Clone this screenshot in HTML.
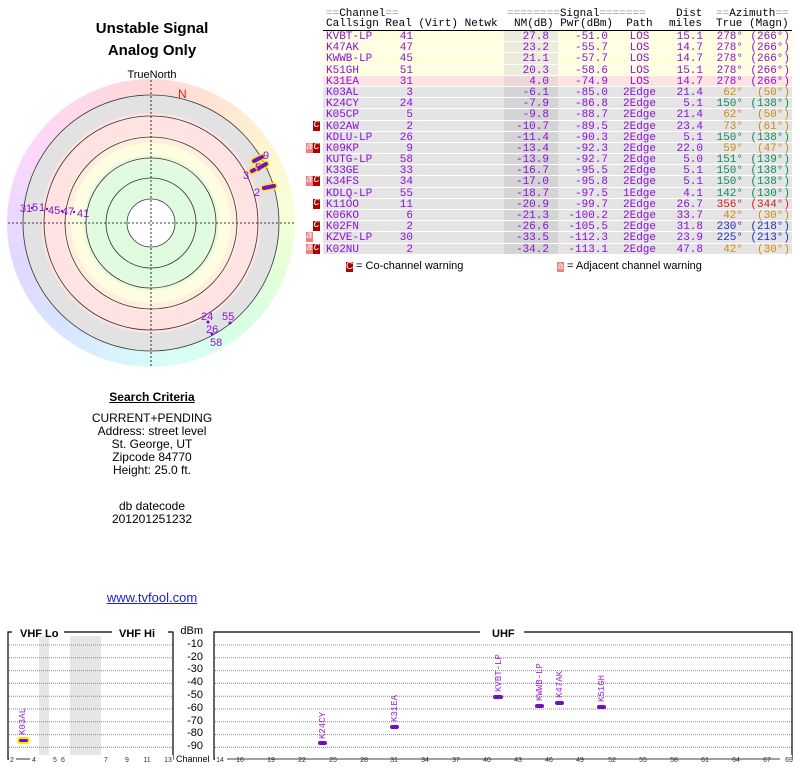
<!DOCTYPE html>
<html><head><meta charset="utf-8"><style>
*{margin:0;padding:0;box-sizing:border-box}
body{width:800px;height:768px;background:#fff;position:relative;overflow:hidden;font-family:"Liberation Sans",sans-serif;color:#000}
.a{position:absolute}
.ttl{position:absolute;left:0;width:304px;text-align:center;font-weight:bold;font-size:15px}
.mono{font-family:"Liberation Mono","DejaVu Sans Mono",monospace;font-size:11px}
.hdr{position:absolute;left:0;width:800px;height:11px;line-height:11px}
.hdr span{position:absolute;white-space:pre}
.gr{color:#999}
#tbl{position:absolute;left:0;top:31px;width:800px}
.r{position:relative;height:11.2px;line-height:12px;color:#8a10d8;white-space:pre}
.r .bg{position:absolute;left:323px;width:469px;top:0;height:10.2px;background:#e4e4e4}
.r.y .bg{background:#ffffe0}
.r.p .bg{background:#ffe2e2}
.r .nm{position:absolute;left:504px;width:54px;top:0;height:10.2px;background:#d4d4d4}
.r.y .nm{background:#ececdc}
.r.p .nm{background:#ecd8d8}
.r span{position:absolute;top:0}
.c0{left:326px}.c1{right:387px}.c2{right:251px}.c3{right:192px}.c4{left:623px}.c5{right:97px}.c6{right:57px}.c7{right:10px}
.o{color:#d08a10}.g{color:#108a5a}.rd{color:#d02020}.b{color:#2030c0}
.wc{position:absolute;background:#b00000;color:#fff;width:7px;height:10px;top:0;font-size:10px;line-height:10px;text-align:center}
.wa{position:absolute;background:#f08080;color:#fff;width:7px;height:10px;top:0;font-size:10px;line-height:10px;text-align:center}
.ctr{position:absolute;left:0;width:304px;text-align:center;font-size:12px;line-height:13px}
.vl{position:absolute;font-family:"Liberation Mono",monospace;font-size:9px;color:#a020e0;transform-origin:0 0;transform:rotate(-90deg);white-space:nowrap}
.bar{position:absolute;height:4px;background:#7010c0;border-radius:2px}
.dl{position:absolute;font-size:11px;right:597px;line-height:11px}
</style></head><body>
<div class="ttl" style="top:20px">Unstable Signal</div>
<div class="ttl" style="top:42px">Analog Only</div>
<div class="a" style="left:0;width:304px;text-align:center;top:69px;font-size:11px">TrueNorth</div>

<div class="a" style="left:7px;top:79px;width:288px;height:288px;border-radius:50%;background:conic-gradient(#ffd8d8,#ffe4d4,#fff4d0,#f8ffd8,#e4ffd8,#d8ffe4,#d8fff4,#d8f4ff,#d8e4ff,#e0d8ff,#ecd8ff,#ffd8f8,#ffd8e8,#ffd8d8)"></div>
<svg class="a" style="left:0;top:60px" width="304" height="320" viewBox="0 60 304 320">
<circle cx="151" cy="223" r="128" fill="#e2e2e2"/>
<circle cx="151" cy="223" r="110" fill="#ffe2e2"/>
<circle cx="151" cy="223" r="88" fill="#ffeedd"/>
<circle cx="151" cy="223" r="80" fill="#fffde0"/>
<circle cx="151" cy="223" r="68" fill="#e6fae0"/>
<circle cx="151" cy="223" r="60" fill="#e0fae0"/>
<circle cx="151" cy="223" r="24" fill="#fff"/>
<g fill="none" stroke="#333" stroke-width="0.8">
<circle cx="151" cy="223" r="128"/><circle cx="151" cy="223" r="107"/><circle cx="151" cy="223" r="86"/><circle cx="151" cy="223" r="65"/><circle cx="151" cy="223" r="45"/><circle cx="151" cy="223" r="24"/>
</g>
<g stroke="#000" stroke-width="0.8" stroke-dasharray="2,2">
<line x1="8" y1="223" x2="296" y2="223"/><line x1="151" y1="80" x2="151" y2="366"/>
</g>
<text x="178" y="98" fill="#e02020" font-size="12" font-family="Liberation Sans">N</text>
<g stroke="#ffe800" stroke-width="7" stroke-linecap="round"><line x1="254" y1="161" x2="262" y2="157"/><line x1="259" y1="168" x2="266" y2="164"/><line x1="252" y1="171" x2="254" y2="170"/><line x1="264" y1="188" x2="274" y2="186"/></g>
<g stroke="#7010d0" stroke-width="4" stroke-linecap="round"><line x1="254" y1="161" x2="262" y2="157"/><line x1="259" y1="168" x2="266" y2="164"/><line x1="252" y1="171" x2="254" y2="170"/><line x1="264" y1="188" x2="274" y2="186"/></g>
<g fill="#8a10d8" font-size="11" font-family="Liberation Sans">
<text x="263" y="159">9</text><text x="255" y="171">5</text><text x="243" y="179">3</text><text x="254" y="196">2</text>
<text x="20" y="212">3</text><text x="26" y="212">1</text><text x="32" y="211">5</text><text x="39" y="211">1</text><text x="48" y="214">45</text><text x="62" y="215">47</text><text x="77" y="217">41</text>
<text x="201" y="320">24</text><text x="222" y="320">55</text><text x="206" y="333">26</text><text x="210" y="346">58</text>
</g>
<g fill="#7010d0"><circle cx="208" cy="322" r="1.5"/><circle cx="230" cy="323" r="1.5"/><circle cx="212" cy="334" r="1.5"/><circle cx="32" cy="208" r="1.2"/><circle cx="47" cy="209" r="1.2"/><circle cx="62" cy="211" r="1.2"/><circle cx="74" cy="212" r="1.2"/></g>
</svg>

<div class="mono">
<div class="hdr" style="top:9px"><span style="left:326px"><b class="gr" style="font-weight:normal">==</b>Channel<b class="gr" style="font-weight:normal">==</b></span><span style="left:507px"><b class="gr" style="font-weight:normal">========</b>Signal<b class="gr" style="font-weight:normal">=======</b></span><span style="left:676px">Dist</span><span style="left:716px"><b class="gr" style="font-weight:normal">==</b>Azimuth<b class="gr" style="font-weight:normal">==</b></span></div>
<div class="hdr" style="top:19px"><span style="left:326px">Callsign Real (Virt) Netwk</span><span style="left:514px">NM(dB) Pwr(dBm)  Path</span><span style="left:669px">miles</span><span style="left:716px">True (Magn)</span></div>
<div class="a" style="left:323px;top:30px;width:469px;height:1px;background:#000"></div>
<div id="tbl">
<div class="r y"><i class="bg"></i><i class="nm"></i><span class="c0">KVBT-LP</span><span class="c1">41</span><span class="c2">27.8</span><span class="c3">-51.0</span><span class="c4"> LOS</span><span class="c5">15.1</span><span class="c6">278°</span><span class="c7">(266°)</span></div>
<div class="r y"><i class="bg"></i><i class="nm"></i><span class="c0">K47AK</span><span class="c1">47</span><span class="c2">23.2</span><span class="c3">-55.7</span><span class="c4"> LOS</span><span class="c5">14.7</span><span class="c6">278°</span><span class="c7">(266°)</span></div>
<div class="r y"><i class="bg"></i><i class="nm"></i><span class="c0">KWWB-LP</span><span class="c1">45</span><span class="c2">21.1</span><span class="c3">-57.7</span><span class="c4"> LOS</span><span class="c5">14.7</span><span class="c6">278°</span><span class="c7">(266°)</span></div>
<div class="r y"><i class="bg"></i><i class="nm"></i><span class="c0">K51GH</span><span class="c1">51</span><span class="c2">20.3</span><span class="c3">-58.6</span><span class="c4"> LOS</span><span class="c5">15.1</span><span class="c6">278°</span><span class="c7">(266°)</span></div>
<div class="r p"><i class="bg"></i><i class="nm"></i><span class="c0">K31EA</span><span class="c1">31</span><span class="c2">4.0</span><span class="c3">-74.9</span><span class="c4"> LOS</span><span class="c5">14.7</span><span class="c6">278°</span><span class="c7">(266°)</span></div>
<div class="r"><i class="bg"></i><i class="nm"></i><span class="c0">K03AL</span><span class="c1">3</span><span class="c2">-6.1</span><span class="c3">-85.0</span><span class="c4">2Edge</span><span class="c5">21.4</span><span class="c6 o">62°</span><span class="c7 o">(50°)</span></div>
<div class="r"><i class="bg"></i><i class="nm"></i><span class="c0">K24CY</span><span class="c1">24</span><span class="c2">-7.9</span><span class="c3">-86.8</span><span class="c4">2Edge</span><span class="c5">5.1</span><span class="c6 g">150°</span><span class="c7 g">(138°)</span></div>
<div class="r"><i class="bg"></i><i class="nm"></i><span class="c0">K05CP</span><span class="c1">5</span><span class="c2">-9.8</span><span class="c3">-88.7</span><span class="c4">2Edge</span><span class="c5">21.4</span><span class="c6 o">62°</span><span class="c7 o">(50°)</span></div>
<div class="r"><i class="wc" style="left:313px">C</i><i class="bg"></i><i class="nm"></i><span class="c0">K02AW</span><span class="c1">2</span><span class="c2">-10.7</span><span class="c3">-89.5</span><span class="c4">2Edge</span><span class="c5">23.4</span><span class="c6 o">73°</span><span class="c7 o">(61°)</span></div>
<div class="r"><i class="bg"></i><i class="nm"></i><span class="c0">KDLU-LP</span><span class="c1">26</span><span class="c2">-11.4</span><span class="c3">-90.3</span><span class="c4">2Edge</span><span class="c5">5.1</span><span class="c6 g">150°</span><span class="c7 g">(138°)</span></div>
<div class="r"><i class="wa" style="left:306px">a</i><i class="wc" style="left:313px">C</i><i class="bg"></i><i class="nm"></i><span class="c0">K09KP</span><span class="c1">9</span><span class="c2">-13.4</span><span class="c3">-92.3</span><span class="c4">2Edge</span><span class="c5">22.0</span><span class="c6 o">59°</span><span class="c7 o">(47°)</span></div>
<div class="r"><i class="bg"></i><i class="nm"></i><span class="c0">KUTG-LP</span><span class="c1">58</span><span class="c2">-13.9</span><span class="c3">-92.7</span><span class="c4">2Edge</span><span class="c5">5.0</span><span class="c6 g">151°</span><span class="c7 g">(139°)</span></div>
<div class="r"><i class="bg"></i><i class="nm"></i><span class="c0">K33GE</span><span class="c1">33</span><span class="c2">-16.7</span><span class="c3">-95.5</span><span class="c4">2Edge</span><span class="c5">5.1</span><span class="c6 g">150°</span><span class="c7 g">(138°)</span></div>
<div class="r"><i class="wa" style="left:306px">a</i><i class="wc" style="left:313px">C</i><i class="bg"></i><i class="nm"></i><span class="c0">K34FS</span><span class="c1">34</span><span class="c2">-17.0</span><span class="c3">-95.8</span><span class="c4">2Edge</span><span class="c5">5.1</span><span class="c6 g">150°</span><span class="c7 g">(138°)</span></div>
<div class="r"><i class="bg"></i><i class="nm"></i><span class="c0">KDLQ-LP</span><span class="c1">55</span><span class="c2">-18.7</span><span class="c3">-97.5</span><span class="c4">1Edge</span><span class="c5">4.1</span><span class="c6 g">142°</span><span class="c7 g">(130°)</span></div>
<div class="r"><i class="wc" style="left:313px">C</i><i class="bg"></i><i class="nm"></i><span class="c0">K11OO</span><span class="c1">11</span><span class="c2">-20.9</span><span class="c3">-99.7</span><span class="c4">2Edge</span><span class="c5">26.7</span><span class="c6 rd">356°</span><span class="c7 rd">(344°)</span></div>
<div class="r"><i class="bg"></i><i class="nm"></i><span class="c0">K06KO</span><span class="c1">6</span><span class="c2">-21.3</span><span class="c3">-100.2</span><span class="c4">2Edge</span><span class="c5">33.7</span><span class="c6 o">42°</span><span class="c7 o">(30°)</span></div>
<div class="r"><i class="wc" style="left:313px">C</i><i class="bg"></i><i class="nm"></i><span class="c0">K02FN</span><span class="c1">2</span><span class="c2">-26.6</span><span class="c3">-105.5</span><span class="c4">2Edge</span><span class="c5">31.8</span><span class="c6 b">230°</span><span class="c7 b">(218°)</span></div>
<div class="r"><i class="wa" style="left:306px">a</i><i class="bg"></i><i class="nm"></i><span class="c0">KZVE-LP</span><span class="c1">30</span><span class="c2">-33.5</span><span class="c3">-112.3</span><span class="c4">2Edge</span><span class="c5">23.9</span><span class="c6 b">225°</span><span class="c7 b">(213°)</span></div>
<div class="r"><i class="wa" style="left:306px">a</i><i class="wc" style="left:313px">C</i><i class="bg"></i><i class="nm"></i><span class="c0">K02NU</span><span class="c1">2</span><span class="c2">-34.2</span><span class="c3">-113.1</span><span class="c4">2Edge</span><span class="c5">47.8</span><span class="c6 o">42°</span><span class="c7 o">(30°)</span></div>
</div>
</div>
<div class="a" style="top:260px;left:346px;font-size:11px;line-height:12px"><i class="wc" style="position:relative;display:inline-block;font-style:normal">C</i> = Co-channel warning</div>
<div class="a" style="top:260px;left:557px;font-size:11px;line-height:12px"><i class="wa" style="position:relative;display:inline-block;font-style:normal">a</i> = Adjacent channel warning</div>

<div class="ctr" style="top:391px;font-weight:bold;text-decoration:underline">Search Criteria</div>
<div class="ctr" style="top:412px">CURRENT+PENDING<br>Address: street level<br>St. George, UT<br>Zipcode 84770<br>Height: 25.0 ft.</div>
<div class="ctr" style="top:500px">db datecode<br>201201251232</div>
<div class="ctr" style="top:591px;font-size:13px;color:#2020d0;text-decoration:underline">www.tvfool.com</div>

<div class="a" style="left:39px;top:636px;width:10px;height:121px;background:#e6e6e6"></div>
<div class="a" style="left:70px;top:636px;width:31px;height:121px;background:#e6e6e6"></div>
<svg class="a" style="left:0;top:625px" width="800" height="143" viewBox="0 625 800 143">
<g stroke="#888" stroke-width="1" stroke-dasharray="1,1">
<line x1="9" y1="645" x2="173" y2="645"/><line x1="9" y1="657.8" x2="173" y2="657.8"/><line x1="9" y1="670.6" x2="173" y2="670.6"/><line x1="9" y1="683.4" x2="173" y2="683.4"/><line x1="9" y1="696.2" x2="173" y2="696.2"/><line x1="9" y1="709" x2="173" y2="709"/><line x1="9" y1="721.8" x2="173" y2="721.8"/><line x1="9" y1="734.6" x2="173" y2="734.6"/><line x1="9" y1="747.4" x2="173" y2="747.4"/>
<line x1="215" y1="645" x2="792" y2="645"/><line x1="215" y1="657.8" x2="792" y2="657.8"/><line x1="215" y1="670.6" x2="792" y2="670.6"/><line x1="215" y1="683.4" x2="792" y2="683.4"/><line x1="215" y1="696.2" x2="792" y2="696.2"/><line x1="215" y1="709" x2="792" y2="709"/><line x1="215" y1="721.8" x2="792" y2="721.8"/><line x1="215" y1="734.6" x2="792" y2="734.6"/><line x1="215" y1="747.4" x2="792" y2="747.4"/>
</g>
<g stroke="#000" stroke-width="1.2" fill="none">
<polyline points="12,632 8,632 8,759 173,759 173,632 168,632"/>
<line x1="64" y1="632" x2="112" y2="632"/>
<polyline points="480,632 219,632 214,632 214,759 792,759 792,632 524,632"/>
</g>
<g font-family="Liberation Sans" font-weight="bold" font-size="11"><text x="20" y="637">VHF Lo</text><text x="119" y="637">VHF Hi</text><text x="492" y="637">UHF</text></g>
<g font-family="Liberation Sans" font-size="7" fill="#333" text-anchor="middle">
<rect x="9" y="755" width="164" height="8" fill="#fff"/><rect x="215" y="755" width="577" height="8" fill="#fff"/>
<text x="12" y="762">2</text><text x="34" y="762">4</text><text x="55" y="762">5</text><text x="63" y="762">6</text><text x="106" y="762">7</text><text x="127" y="762">9</text><text x="147" y="762">11</text><text x="168" y="762">13</text>
<text x="220" y="762">14</text><text x="240" y="762">16</text><text x="271" y="762">19</text><text x="302" y="762">22</text><text x="333" y="762">25</text><text x="364" y="762">28</text><text x="394" y="762">31</text><text x="425" y="762">34</text><text x="456" y="762">37</text><text x="487" y="762">40</text><text x="518" y="762">43</text><text x="549" y="762">46</text><text x="580" y="762">49</text><text x="612" y="762">52</text><text x="643" y="762">55</text><text x="674" y="762">58</text><text x="705" y="762">61</text><text x="736" y="762">64</text><text x="767" y="762">67</text><text x="789" y="762">69</text>
</g>
<g stroke="#000" stroke-width="0.8"><line x1="16" y1="759" x2="30" y2="759"/><line x1="227" y1="759" x2="780" y2="759"/></g>
<text x="176" y="762" font-family="Liberation Sans" font-size="9">Channel</text>
</svg>
<div class="dl" style="top:626px">dBm</div>
<div class="dl" style="top:639px">-10</div><div class="dl" style="top:652px">-20</div><div class="dl" style="top:664px">-30</div><div class="dl" style="top:677px">-40</div><div class="dl" style="top:690px">-50</div><div class="dl" style="top:703px">-60</div><div class="dl" style="top:716px">-70</div><div class="dl" style="top:728px">-80</div><div class="dl" style="top:741px">-90</div>

<div class="bar" style="left:17px;top:737px;width:13px;height:7px;background:#ffe800;border-radius:3px"></div>
<div class="bar" style="left:19px;top:739px;width:9px;height:3px"></div>
<div class="bar" style="left:318px;top:741px;width:9px"></div>
<div class="bar" style="left:390px;top:725px;width:9px"></div>
<div class="bar" style="left:493px;top:695px;width:10px"></div>
<div class="bar" style="left:535px;top:704px;width:9px"></div>
<div class="bar" style="left:555px;top:701px;width:9px"></div>
<div class="bar" style="left:597px;top:705px;width:9px"></div>
<div class="vl" style="left:18px;top:735px">K03AL</div>
<div class="vl" style="left:318px;top:739px">K24CY</div>
<div class="vl" style="left:390px;top:722px">K31EA</div>
<div class="vl" style="left:494px;top:692px">KVBT-LP</div>
<div class="vl" style="left:535px;top:701px">KWWB-LP</div>
<div class="vl" style="left:555px;top:698px">K47AK</div>
<div class="vl" style="left:597px;top:702px">K51GH</div>
</body></html>
